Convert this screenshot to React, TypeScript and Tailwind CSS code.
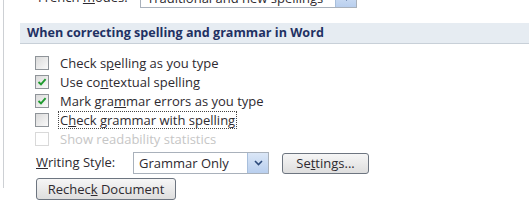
import type { ReactNode } from 'react';

function Box({ checked, disabled }: { checked?: boolean; disabled?: boolean }) {
  return (
    <span
      className={`flex h-[14px] w-[14px] shrink-0 items-center justify-center border ${
        disabled ? 'border-[#d9d9d9] bg-white' : 'border-[#8f9499] bg-gradient-to-br from-[#dadada] to-[#fafafa]'
      }`}
    >
      {checked && (
        <svg width="10" height="10" viewBox="0 0 10 10">
          <path d="M1.5 5 L4 7.4 L8.6 2.2" fill="none" stroke="#1f9b2f" strokeWidth="1.9" />
        </svg>
      )}
    </span>
  );
}

function Row({ checked, disabled, focused, children }: { checked?: boolean; disabled?: boolean; focused?: boolean; children: ReactNode }) {
  return (
    <div className="flex h-[19px] items-center gap-[9px]">
      <Box checked={checked} disabled={disabled} />
      <span
        className={`px-[1px] leading-[16px] ${disabled ? 'text-[#c6c6c6]' : 'text-[#2e2a30]'} ${
          focused ? 'border border-dotted border-[#444]' : 'border border-transparent'
        }`}
      >
        {children}
      </span>
    </div>
  );
}

function Arrow() {
  return (
    <span className="flex h-full w-[21px] items-center justify-center border-l border-[#a8bfdc] bg-gradient-to-b from-[#dbe7f7] to-[#b9cfee]">
      <svg width="9" height="6" viewBox="0 0 9 6">
        <path d="M1 1 L4.5 4.5 L8 1" fill="none" stroke="#2c4a7a" strokeWidth="1.6" />
      </svg>
    </span>
  );
}

export default function App() {
  return (
    <div className="h-[200px] w-[529px] overflow-hidden bg-white font-['Open_Sans',sans-serif] text-[13px]">
      <div className="ml-[3px] h-full border-l border-[#cdd0d4]">
        {/* French modes row, mostly scrolled out of view */}
        <div className="-mt-[12px] flex items-center">
          <span className="ml-[34px] w-[102px] text-[#2e2a30]">
            French <u>m</u>odes:
          </span>
          <div className="flex h-[20px] w-[217px] items-stretch border border-[#a9b1bb]">
            <span className="flex-1 pl-[6px] leading-[18px] text-[#2e2a30]">Traditional and new spellings</span>
            <Arrow />
          </div>
        </div>

        <div className="ml-[16px] mt-[15px] flex h-[21px] items-center border-b border-[#c8d0d8] bg-[#e6ecf2] pl-[7px]">
          <span className="text-[12.6px] font-bold text-[#1f3163]">When correcting spelling and grammar in Word</span>
        </div>

        <div className="ml-[31px] mt-[9px] flex flex-col">
          <Row>
            Check s<u>p</u>elling as you type
          </Row>
          <Row checked>
            Use co<u>n</u>textual spelling
          </Row>
          <Row checked>
            Mark gra<u>m</u>mar errors as you type
          </Row>
          <Row focused>
            C<u>h</u>eck grammar with spelling
          </Row>
          <Row disabled>Show readability statistics</Row>
        </div>

        <div className="ml-[32px] mt-[4px] flex items-center">
          <span className="w-[97px] text-[#2e2a30]">
            <u>W</u>riting Style:
          </span>
          <div className="flex h-[22px] w-[136px] items-stretch border border-[#a9b1bb]">
            <span className="flex-1 pl-[5px] leading-[20px] text-[#2e2a30]">Grammar Only</span>
            <Arrow />
          </div>
          <button className="ml-[13px] h-[21px] w-[87px] rounded-[3px] border border-[#6d7580] bg-gradient-to-b from-[#f6f6f6] to-[#dedede] leading-[19px] text-[#2e2a30]">
            Se<u>t</u>tings...
          </button>
        </div>

        <div className="ml-[32px] mt-[4px]">
          <button className="h-[22px] w-[140px] rounded-[3px] border border-[#6d7580] bg-gradient-to-b from-[#f6f6f6] to-[#dedede] leading-[20px] text-[#2e2a30]">
            Rechec<u>k</u> Document
          </button>
        </div>
      </div>
    </div>
  );
}
